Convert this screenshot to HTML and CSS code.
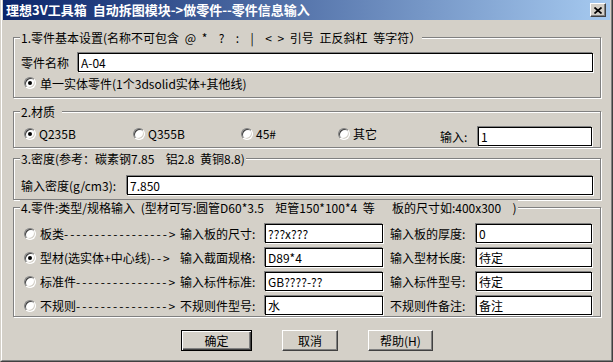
FILE: index.html
```html
<!DOCTYPE html>
<html lang="zh-CN">
<head>
<meta charset="utf-8">
<title>零件信息输入</title>
<link rel="stylesheet" href="styles.css">
</head>
<body>
<div class="window">
  <div class="frame">
    <div class="titlebar">
      <span class="title">理想3V工具箱 自动拆图模块-&gt;做零件--零件信息输入</span>
      <span class="close"><svg width="8" height="7" viewBox="0 0 8 7"><path d="M0.5 0.5 L7.5 6.5 M7.5 0.5 L0.5 6.5" stroke="#000" stroke-width="1.7" fill="none"/></svg></span>
    </div>
    <div class="dialog">
      <fieldset class="group g1">
        <legend>1.零件基本设置(名称不可包含 @ *  ?  :  |  &lt; &gt; 引号 正反斜杠 等字符）</legend>
        <div class="body">
          <div class="row">
            <span class="lbl w-name">零件名称</span>
            <input class="field w-namein" type="text" value="A-04">
          </div>
          <div class="row r-single">
            <span class="radio on"></span><span class="rtxt">单一实体零件(1个3dsolid实体+其他线)</span>
          </div>
        </div>
      </fieldset>

      <fieldset class="group g2">
        <legend>2.材质 </legend>
        <div class="body">
          <div class="row">
            <span class="opt o1"><span class="radio on"></span><span class="rtxt">Q235B</span></span>
            <span class="opt o2"><span class="radio"></span><span class="rtxt">Q355B</span></span>
            <span class="opt o3"><span class="radio"></span><span class="rtxt">45#</span></span>
            <span class="opt o4"><span class="radio"></span><span class="rtxt">其它</span></span>
            <span class="lbl w-mat">输入:</span>
            <input class="field w-matin" type="text" value="1">
          </div>
        </div>
      </fieldset>

      <fieldset class="group g3">
        <legend>3.密度(参考：碳素钢7.85  铝2.8 黄铜8.8)</legend>
        <div class="body">
          <div class="row">
            <span class="lbl w-den">输入密度(g/cm3):</span>
            <input class="field w-denin" type="text" value="7.850">
          </div>
        </div>
      </fieldset>

      <fieldset class="group g4">
        <legend>4.零件:类型/规格输入 (型材可写:圆管D60*3.5  矩管150*100*4 等   板的尺寸如:400x300  )</legend>
        <div class="body grid4">
          <span class="opt kind"><span class="radio"></span><span class="rtxt">板类</span><span class="dash">-----------------</span><span class="arr">&gt;</span></span>
          <span class="lbl">输入板的尺寸:</span>
          <input class="field" type="text" value="???x???">
          <span class="lbl lbl2">输入板的厚度:</span>
          <input class="field" type="text" value="0">

          <span class="opt kind"><span class="radio on"></span><span class="rtxt">型材(选实体+中心线)</span><span class="dash">--</span><span class="arr">&gt;</span></span>
          <span class="lbl">输入截面规格:</span>
          <input class="field" type="text" value="D89*4">
          <span class="lbl lbl2">输入型材长度:</span>
          <input class="field" type="text" value="待定">

          <span class="opt kind"><span class="radio"></span><span class="rtxt">标准件</span><span class="dash">---------------</span><span class="arr">&gt;</span></span>
          <span class="lbl">输入标件标准:</span>
          <input class="field" type="text" value="GB????-??">
          <span class="lbl lbl2">输入标件型号:</span>
          <input class="field" type="text" value="待定">

          <span class="opt kind"><span class="radio"></span><span class="rtxt">不规则</span><span class="dash">---------------</span><span class="arr">&gt;</span></span>
          <span class="lbl">不规则件型号:</span>
          <input class="field" type="text" value="水">
          <span class="lbl lbl2">不规则件备注:</span>
          <input class="field" type="text" value="备注">
        </div>
      </fieldset>

      <div class="buttons">
        <button class="btn default b-ok" type="button">确定</button>
        <button class="btn b-cancel" type="button">取消</button>
        <button class="btn b-help" type="button">帮助(H)</button>
      </div>
    </div>
  </div>
</div>
</body>
</html>
```
FILE: styles.css
```css
* { box-sizing: border-box; }
html, body { margin: 0; padding: 0; }
body {
  width: 613px;
  height: 362px;
  overflow: hidden;
  background: #d4d0c8;
  font-family: "Noto Sans CJK SC", "Noto Sans", sans-serif;
  font-size: 12px;
  color: #000;
}
.window {
  width: 613px;
  height: 362px;
  background: #d4d0c8;
  border-left: 1px solid #d4d0c8;
  border-right: 1px solid #404040;
  border-bottom: 1px solid #404040;
  display: flex;
  flex-direction: column;
}
.frame {
  flex: 1;
  display: flex;
  flex-direction: column;
  border-left: 1px solid #fff;
  border-right: 1px solid #808080;
  border-bottom: 1px solid #808080;
  padding: 0 1px 1px 1px;
}
.titlebar {
  height: 20px;
  flex: none;
  display: flex;
  align-items: center;
  padding: 0 4px 0 3px;
  background: linear-gradient(to right, #0a246a, #a6caf0);
}
.title {
  flex: 1;
  color: #fff;
  font-weight: bold;
  font-size: 13px;
  line-height: 18px;
  white-space: nowrap;
  word-spacing: 3px;
}
.close {
  flex: none;
  width: 16px;
  height: 14px;
  display: flex;
  align-items: center;
  justify-content: center;
  background: #d4d0c8;
  border: 1px solid;
  border-color: #fff #404040 #404040 #fff;
  box-shadow: inset -1px -1px 0 #808080;
}
.dialog {
  flex: 1;
  padding-left: 10px;
}
.group {
  width: 588px;
  margin: 0;
  padding: 0;
  min-width: 0;
  border: 1px solid #808080;
  box-shadow: inset 1px 1px 0 #fff, 1px 1px 0 #fff;
}
.group legend {
  margin-left: 6px;
  padding: 0 1px;
  height: 15px;
  line-height: 15px;
  white-space: pre;
  word-spacing: 3px;
  background: #d4d0c8;
}
.g1 { margin-top: 10px; }
.g2 { margin-top: 6px; }
.g3 { margin-top: 3px; }
.g4 { margin-top: 0; }

.g1 .body { padding: 8px 7px 5px 7px; }
.g2 .body { padding: 8px 8px 1px 10px; }
.g3 .body { padding: 10px 7px 4px 7px; }
.g4 .body { padding: 9px 8px 1px 10px; }

.row {
  display: flex;
  align-items: center;
}
.r-single {
  height: 18px;
  margin-top: 2px;
  margin-left: 3px;
}
.lbl {
  white-space: nowrap;
  line-height: 19px;
}
.field {
  height: 19px;
  margin: 0;
  padding: 0 2px;
  font: inherit;
  color: #000;
  background: #fff;
  border: 1px solid #000;
  box-shadow: -1px -1px 0 #808080, 1px 1px 0 #fff;
  outline: none;
  min-width: 0;
}
.w-name { width: 57px; }
.w-namein { width: 515px; }
.w-mat { width: 38px; }
.w-matin { width: 114px; }
.w-den { width: 106px; }
.w-denin { width: 466px; }

.radio {
  flex: none;
  width: 12px;
  height: 12px;
  border-radius: 50%;
  background: #fff;
  border: 1px solid;
  border-color: #808080 #fff #fff #808080;
  box-shadow: inset 1px 1px 0 #404040, inset -1px -1px 0 #d4d0c8;
  display: flex;
  align-items: center;
  justify-content: center;
}
.radio.on::after {
  content: "";
  width: 4px;
  height: 4px;
  border-radius: 50%;
  background: #000;
}
.rtxt {
  margin-left: 4px;
  white-space: nowrap;
}
.opt {
  display: flex;
  align-items: center;
  flex: none;
}
.g2 .opt { margin-top: -6px; }
.g2 .rtxt { margin-left: 3px; }
.o1 { width: 109px; }
.o2 { width: 108px; }
.o3 { width: 97px; }
.o4 { width: 102px; }

.grid4 {
  display: grid;
  grid-template-columns: 156px 85px 118px 93px 116px;
  grid-auto-rows: 19px;
  row-gap: 5px;
  align-items: center;
}
.grid4 .field { width: 100%; }
.dash {
  white-space: nowrap;
  letter-spacing: 2px;
}
.arr { flex: none; }
.lbl2 { padding-left: 7px; }

.buttons {
  display: flex;
  gap: 30px;
  margin-top: 13px;
  padding-left: 168px;
}
.btn {
  height: 21px;
  margin: 0;
  padding: 0;
  font: inherit;
  color: #000;
  background: #d4d0c8;
  border: 1px solid;
  border-color: #fff #404040 #404040 #fff;
  box-shadow: inset -1px -1px 0 #808080;
}
.btn.default {
  border: 1px solid #000;
  box-shadow: inset 1px 1px 0 #fff, inset -1px -1px 0 #404040, inset -2px -2px 0 #808080;
}
.b-ok { width: 71px; }
.b-cancel { width: 56px; }
.b-help { width: 65px; }
```
